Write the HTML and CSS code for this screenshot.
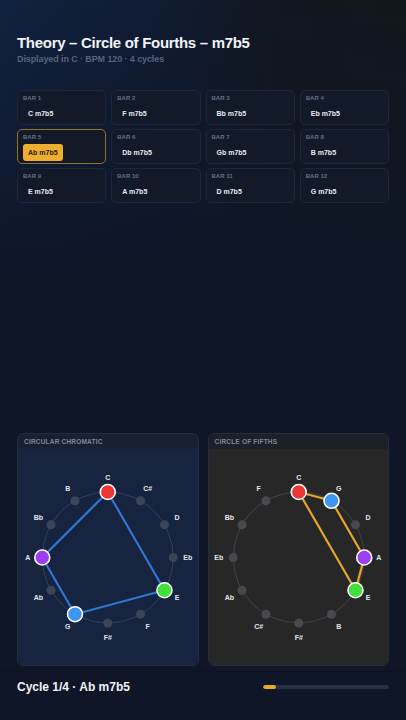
FILE: index.html
```html
<!DOCTYPE html>
<html lang="en">
<head>
<meta charset="utf-8">
<title>Theory – Circle of Fourths – m7b5</title>
<link rel="stylesheet" href="styles.css">
</head>
<body>
<div class="page">
  <h1 class="title">Theory – Circle of Fourths – m7b5</h1>
  <div class="subtitle">Displayed in C · BPM 120 · 4 cycles</div>

  <div class="bars">
    <div class="bar"><div class="bar-label">BAR 1</div><span class="chord">C m7b5</span></div>
    <div class="bar"><div class="bar-label">BAR 2</div><span class="chord">F m7b5</span></div>
    <div class="bar"><div class="bar-label">BAR 3</div><span class="chord">Bb m7b5</span></div>
    <div class="bar"><div class="bar-label">BAR 4</div><span class="chord">Eb m7b5</span></div>
    <div class="bar active"><div class="bar-label">BAR 5</div><span class="chord">Ab m7b5</span></div>
    <div class="bar"><div class="bar-label">BAR 6</div><span class="chord">Db m7b5</span></div>
    <div class="bar"><div class="bar-label">BAR 7</div><span class="chord">Gb m7b5</span></div>
    <div class="bar"><div class="bar-label">BAR 8</div><span class="chord">B m7b5</span></div>
    <div class="bar"><div class="bar-label">BAR 9</div><span class="chord">E m7b5</span></div>
    <div class="bar"><div class="bar-label">BAR 10</div><span class="chord">A m7b5</span></div>
    <div class="bar"><div class="bar-label">BAR 11</div><span class="chord">D m7b5</span></div>
    <div class="bar"><div class="bar-label">BAR 12</div><span class="chord">G m7b5</span></div>
  </div>

  <div class="panels">
    <section class="panel chromatic">
      <div class="panel-head">CIRCULAR CHROMATIC</div>
      <svg class="wheel" viewBox="0 0 179 216" width="179" height="216">
        <circle class="ring" cx="89.5" cy="108.5" r="65.5"/>
        <polygon class="shape" points="89.5,43 146.22,141.25 56.75,165.22 24,108.5"/>
        <circle class="dot" cx="122.25" cy="51.77" r="4.5"/>
        <circle class="dot" cx="146.22" cy="75.75" r="4.5"/>
        <circle class="dot" cx="155" cy="108.5" r="4.5"/>
        <circle class="dot" cx="122.25" cy="165.22" r="4.5"/>
        <circle class="dot" cx="89.5" cy="174" r="4.5"/>
        <circle class="dot" cx="32.78" cy="141.25" r="4.5"/>
        <circle class="dot" cx="32.78" cy="75.75" r="4.5"/>
        <circle class="dot" cx="56.75" cy="51.77" r="4.5"/>
        <circle class="node red" cx="89.5" cy="43" r="7.5"/>
        <circle class="node green" cx="146.22" cy="141.25" r="7.5"/>
        <circle class="node blue" cx="56.75" cy="165.22" r="7.5"/>
        <circle class="node purple" cx="24" cy="108.5" r="7.5"/>
        <text class="lbl" x="89.5" y="28.5">C</text>
        <text class="lbl" x="129.5" y="39.22">C#</text>
        <text class="lbl" x="158.78" y="68.5">D</text>
        <text class="lbl" x="169.5" y="108.5">Eb</text>
        <text class="lbl" x="158.78" y="148.5">E</text>
        <text class="lbl" x="129.5" y="177.78">F</text>
        <text class="lbl" x="89.5" y="188.5">F#</text>
        <text class="lbl" x="49.5" y="177.78">G</text>
        <text class="lbl" x="20.22" y="148.5">Ab</text>
        <text class="lbl" x="9.5" y="108.5">A</text>
        <text class="lbl" x="20.22" y="68.5">Bb</text>
        <text class="lbl" x="49.5" y="39.22">B</text>
      </svg>
    </section>
    <section class="panel fifths">
      <div class="panel-head">CIRCLE OF FIFTHS</div>
      <svg class="wheel" viewBox="0 0 179 216" width="179" height="216">
        <circle class="ring" cx="89.5" cy="108.5" r="65.5"/>
        <polygon class="shape" points="89.5,43 122.25,51.77 155,108.5 146.22,141.25"/>
        <circle class="dot" cx="146.22" cy="75.75" r="4.5"/>
        <circle class="dot" cx="122.25" cy="165.22" r="4.5"/>
        <circle class="dot" cx="89.5" cy="174" r="4.5"/>
        <circle class="dot" cx="56.75" cy="165.22" r="4.5"/>
        <circle class="dot" cx="32.78" cy="141.25" r="4.5"/>
        <circle class="dot" cx="24" cy="108.5" r="4.5"/>
        <circle class="dot" cx="32.78" cy="75.75" r="4.5"/>
        <circle class="dot" cx="56.75" cy="51.77" r="4.5"/>
        <circle class="node red" cx="89.5" cy="43" r="7.5"/>
        <circle class="node blue" cx="122.25" cy="51.77" r="7.5"/>
        <circle class="node purple" cx="155" cy="108.5" r="7.5"/>
        <circle class="node green" cx="146.22" cy="141.25" r="7.5"/>
        <text class="lbl" x="89.5" y="28.5">C</text>
        <text class="lbl" x="129.5" y="39.22">G</text>
        <text class="lbl" x="158.78" y="68.5">D</text>
        <text class="lbl" x="169.5" y="108.5">A</text>
        <text class="lbl" x="158.78" y="148.5">E</text>
        <text class="lbl" x="129.5" y="177.78">B</text>
        <text class="lbl" x="89.5" y="188.5">F#</text>
        <text class="lbl" x="49.5" y="177.78">C#</text>
        <text class="lbl" x="20.22" y="148.5">Ab</text>
        <text class="lbl" x="9.5" y="108.5">Eb</text>
        <text class="lbl" x="20.22" y="68.5">Bb</text>
        <text class="lbl" x="49.5" y="39.22">F</text>
      </svg>
    </section>
  </div>

  <footer class="footer">
    <div class="cycle">Cycle 1/4 · Ab m7b5</div>
    <div class="progress"><div class="progress-fill" style="width: 10%"></div></div>
  </footer>
</div>
</body>
</html>
```
FILE: styles.css
```css
html, body {
  margin: 0;
  padding: 0;
}

body {
  background-color: #0e1627;
  background-image:
    linear-gradient(180deg, rgba(14, 22, 39, 0) 0%, #0e1627 40%),
    linear-gradient(90deg, #112240 0%, #0f1b31 42%, #12171f 70%, #13171d 100%);
  font-family: "Liberation Sans", Arial, sans-serif;
  color: #eef1f5;
}

.page {
  height: 720px;
  box-sizing: border-box;
  padding: 34px 17px 0;
  display: flex;
  flex-direction: column;
}

.title {
  margin: 0;
  font-size: 15px;
  line-height: 18px;
  font-weight: bold;
  letter-spacing: -0.3px;
  color: #f1f3f7;
}

.subtitle {
  margin-top: 2px;
  font-size: 9px;
  line-height: 11px;
  font-weight: bold;
  letter-spacing: -0.1px;
  color: #56647d;
}

.bars {
  margin-top: 25px;
  display: grid;
  grid-template-columns: repeat(4, 1fr);
  column-gap: 5px;
  row-gap: 4px;
}

.bar {
  height: 35px;
  box-sizing: border-box;
  padding: 4px 5px 0;
  background: #121a2a;
  border: 1px solid #1d2739;
  border-radius: 5px;
}

.bar.active {
  border-color: #93742c;
  background: #131926;
}

.bar-label {
  font-size: 6px;
  line-height: 7px;
  font-weight: bold;
  color: #647188;
}

.chord {
  display: inline-block;
  margin-top: 2px;
  padding: 0 5px;
  height: 17px;
  line-height: 17px;
  font-size: 7px;
  font-weight: bold;
  color: #e8ebf0;
  border-radius: 3px;
}

.bar.active .chord {
  background: #eeae30;
  color: #2b1e06;
}

.panels {
  margin-top: auto;
  display: grid;
  grid-template-columns: 1fr 1fr;
  gap: 9px;
}

.panel {
  border: 1px solid #222d40;
  border-radius: 6px;
  overflow: hidden;
}

.panel-head {
  height: 15px;
  line-height: 16px;
  padding-left: 6px;
  font-size: 6.5px;
  font-weight: bold;
  letter-spacing: 0.2px;
  color: #7c889d;
  background: #171f2d;
}

.chromatic .panel-head {
  background: #182031;
}

.fifths .panel-head {
  background: #1b2029;
}

.wheel {
  display: block;
  width: 100%;
  height: 216px;
}

.chromatic .wheel {
  background: #162440;
}

.fifths .wheel {
  background: #272727;
}

.ring {
  fill: none;
  stroke-width: 1;
}

.chromatic .ring {
  stroke: #33405a;
}

.fifths .ring {
  stroke: #424448;
}

.shape {
  fill: none;
  stroke-width: 2.2;
  stroke-linejoin: round;
}

.chromatic .shape {
  stroke: #2f76d2;
}

.fifths .shape {
  stroke: #e6a52c;
}

.chromatic .dot {
  fill: #3a4558;
}

.fifths .dot {
  fill: #47494f;
}

.node {
  stroke: #ffffff;
  stroke-width: 1.6;
}

.node.red { fill: #ee3535; }
.node.green { fill: #3fe03a; }
.node.blue { fill: #3d97ee; }
.node.purple { fill: #9a3ef0; }

.lbl {
  font-family: "Liberation Sans", Arial, sans-serif;
  font-size: 7px;
  font-weight: bold;
  fill: #e3e7ee;
  text-anchor: middle;
  dominant-baseline: central;
}

.footer {
  margin: 5px -17px 0;
  padding: 8px 17px 26px;
  border-top: 1px solid rgba(0, 0, 0, 0.12);
  display: flex;
  justify-content: space-between;
  align-items: center;
}

.cycle {
  font-size: 12px;
  line-height: 14px;
  font-weight: bold;
  color: #f1f3f7;
}

.progress {
  width: 126px;
  height: 4px;
  border-radius: 2px;
  background: #253146;
  overflow: hidden;
}

.progress-fill {
  height: 100%;
  background: #e9a92c;
  border-radius: 2px;
}
```
